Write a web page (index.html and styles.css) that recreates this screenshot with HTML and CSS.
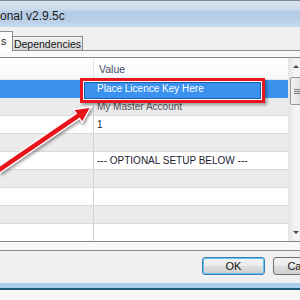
FILE: index.html
```html
<!DOCTYPE html>
<html>
<head>
<meta charset="utf-8">
<link rel="stylesheet" href="styles.css">
</head>
<body>
<div class="window">
  <div class="titlebar"><span class="title">onal v2.9.5c</span></div>
  <div class="client">
    <div class="tabs">
      <div class="tab active">s</div>
      <div class="tab">Dependencies</div>
    </div>
    <div class="page">
      <div class="list">
        <div class="grid">
          <div class="row header"><div class="c1"></div><div class="c2">Value</div></div>
          <div class="row selected"><div class="c1"></div><div class="c2">Place Licence Key Here</div></div>
          <div class="row alt"><div class="c1"></div><div class="c2 dim">My Master Account</div></div>
          <div class="row"><div class="c1"></div><div class="c2">1</div></div>
          <div class="row alt"><div class="c1"></div><div class="c2"></div></div>
          <div class="row"><div class="c1"></div><div class="c2">--- OPTIONAL SETUP BELOW ---</div></div>
          <div class="row alt"><div class="c1"></div><div class="c2"></div></div>
          <div class="row"><div class="c1"></div><div class="c2"></div></div>
          <div class="row alt"><div class="c1"></div><div class="c2"></div></div>
          <div class="row"><div class="c1"></div><div class="c2"></div></div>
        </div>
        <div class="scrollbar">
          <div class="sb-btn"><span class="arr-up"></span></div>
          <div class="sb-track"><div class="thumb"><span class="grip"></span></div></div>
          <div class="sb-btn"><span class="arr-down"></span></div>
        </div>
      </div>
    </div>
    <div class="buttons">
      <div class="btn focus">OK</div>
      <div class="btn">Cancel</div>
    </div>
  </div>
  <div class="strip"></div>
</div>
<div class="callout"></div>
<svg class="arrow" width="300" height="300" viewBox="0 0 300 300">
  <polygon points="91,107 82.3,122.6 79.5,118.5 -18.3,185.5 -21.7,180.5 76.1,113.6 73.3,109.4" fill="#e8141c" stroke="#ffffff" stroke-width="1.5" stroke-linejoin="miter"/>
</svg>
</body>
</html>
```
FILE: styles.css
```css
html, body {
  margin: 0;
  padding: 0;
}
body {
  width: 300px;
  height: 300px;
  overflow: hidden;
  position: relative;
  font-family: "Liberation Sans", Arial, sans-serif;
  background: #f4f4f4;
}
.window {
  width: 340px;
  display: flex;
  flex-direction: column;
}
.titlebar {
  border-top: 1px solid #7a8896;
  background: linear-gradient(#d9e4f0 0px, #cfdcec 8px, #b4cbe6 11px, #b9cfe8 20px, #c9daee 26px);
  display: flex;
  align-items: center;
  padding-top: 6px;
  box-sizing: border-box;
  height: 27px;
}
.title {
  font-size: 12px;
  color: #1b1b1b;
  line-height: 14px;
  margin-top: -2px;
}
.client {
  background: #f0f0f0;
  display: flex;
  flex-direction: column;
}
.tabs {
  height: 23px;
  display: flex;
  align-items: flex-end;
  position: relative;
  z-index: 2;
}
.tab {
  box-sizing: border-box;
  font-size: 10.5px;
  color: #151515;
  border: 1px solid #898c95;
  border-bottom: none;
  display: flex;
  align-items: center;
  justify-content: center;
}
.tab.active {
  width: 13px;
  height: 20px;
  margin-bottom: -1px;
  border-left: none;
  background: #fcfcfc;
  justify-content: flex-start;
  padding-left: 1px;
  padding-bottom: 1px;
}
.tab:not(.active) {
  width: 70px;
  height: 14px;
  background: linear-gradient(#f3f3f3, #e3e3e3 50%, #d9d9d9);
  border-left: none;
  padding-top: 1px;
}
.page {
  border-top: 1px solid #898c95;
  border-bottom: 1px solid #898c95;
  background: #f9f9f9;
  padding: 6px 0 8px 0;
  width: 320px;
}
.list {
  display: flex;
  width: 305px;
  height: 183px;
  border-top: 1px solid #828790;
  border-bottom: 1px solid #828790;
  background: #fff;
}
.grid {
  width: 288px;
  overflow: hidden;
  display: flex;
  flex-direction: column;
  flex: none;
}
.row {
  flex: none;
  height: 18px;
  box-sizing: border-box;
  border-bottom: 1px solid #d9d9d9;
  display: grid;
  grid-template-columns: 94px 1fr;
  font-size: 10px;
  line-height: 17px;
  color: #222230;
  background: #fff;
}
.row .c1 {
  border-right: 1px solid #d3d3d3;
}
.row .c2 {
  padding-left: 3px;
  white-space: nowrap;
}
.row.alt {
  background: #ebebeb;
}
.row.header {
  height: 22px;
  line-height: 22px;
  background: linear-gradient(#ffffff, #f7f8fa);
  border-bottom: 1px solid #e3e6ea;
  color: #3d4a5c;
  font-size: 10.5px;
}
.row.header .c1 {
  border-right: 1px solid #e2e3e5;
}
.row.header .c2 {
  padding-left: 5px;
}
.row.selected {
  background: #3a92ee;
  color: #fff;
  border-bottom: none;
}
.row.selected .c1 {
  border-right: none;
}
.c2.dim {
  color: #55555f;
}
.scrollbar {
  width: 17px;
  flex: none;
  display: flex;
  flex-direction: column;
  background: linear-gradient(90deg, #e4e4e4, #f4f4f4 40%, #f4f4f4);
}
.sb-btn {
  height: 17px;
  display: flex;
  align-items: center;
  justify-content: flex-start;
  padding-left: 5px;
  box-sizing: border-box;
}
.arr-up {
  width: 0;
  height: 0;
  border-left: 3px solid transparent;
  border-right: 3px solid transparent;
  border-bottom: 3px solid #444;
}
.arr-down {
  width: 0;
  height: 0;
  border-left: 3px solid transparent;
  border-right: 3px solid transparent;
  border-top: 3px solid #444;
}
.sb-track {
  flex: 1;
}
.thumb {
  margin: 2px 0 0 2px;
  height: 28px;
  width: 14px;
  box-sizing: border-box;
  border: 1px solid #959595;
  border-radius: 2px;
  background: linear-gradient(90deg, #f3f3f3, #e6e6e6 50%, #d8d8d8);
  display: flex;
  align-items: center;
  padding-left: 3px;
}
.grip {
  width: 6px;
  height: 5px;
  background: repeating-linear-gradient(#7a7a7a 0 1px, transparent 1px 2px);
}
.buttons {
  height: 32px;
  box-sizing: border-box;
  padding: 6px 0 0 202px;
  display: flex;
  gap: 8px;
}
.btn {
  flex: none;
  width: 63px;
  height: 18px;
  box-sizing: border-box;
  border: 1px solid #707070;
  border-radius: 3px;
  background: linear-gradient(#f2f2f2 0%, #ebebeb 50%, #dddddd 51%, #cfcfcf 100%);
  font-size: 11px;
  color: #111;
  display: flex;
  align-items: center;
  justify-content: center;
}
.btn.focus {
  border-color: #3c7fb1;
  box-shadow: inset 0 0 0 1px #5fc3f0;
}
.strip {
  height: 17px;
  background: linear-gradient(#a9cfee 0, #a9cfee 5px, #1c5878 5px, #1c5878 7px, #f6f6f6 7px);
}
.callout {
  position: absolute;
  left: 80px;
  top: 78px;
  width: 185px;
  height: 25px;
  box-sizing: border-box;
  border: 3px solid #e5161f;
  box-shadow: 2px 2px 3px rgba(0, 0, 0, 0.35), inset 0 0 0 1px #ffffff, inset 0 0 0 2px #1f5ca6;
}
.arrow {
  position: absolute;
  left: 0;
  top: 0;
  filter: drop-shadow(1px 2px 1.5px rgba(0, 0, 0, 0.4));
}
```
